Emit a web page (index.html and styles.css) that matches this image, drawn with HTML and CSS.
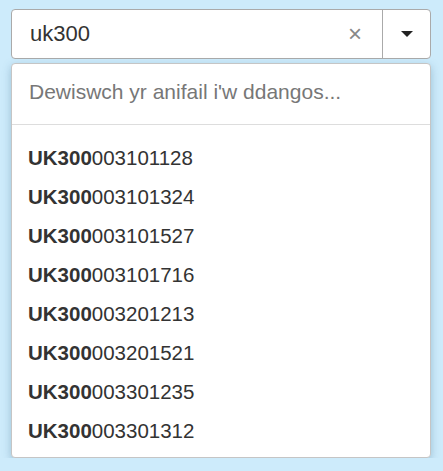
FILE: index.html
```html
<!DOCTYPE html>
<html lang="en">
<head>
    <meta charset="UTF-8">
    <title>Dewis anifail</title>
    <link rel="stylesheet" href="styles.css">
</head>
<body>
    <div class="picker">
        <div class="select-box">
            <div class="select-value">uk300</div>
            <span class="clear">&times;</span>
            <div class="toggle"><span class="caret"></span></div>
        </div>
        <div class="dropdown">
            <div class="search">Dewiswch yr anifail i'w ddangos...</div>
            <ul class="options">
                <li><b>UK300</b>003101128</li>
                <li><b>UK300</b>003101324</li>
                <li><b>UK300</b>003101527</li>
                <li><b>UK300</b>003101716</li>
                <li><b>UK300</b>003201213</li>
                <li><b>UK300</b>003201521</li>
                <li><b>UK300</b>003301235</li>
                <li><b>UK300</b>003301312</li>
            </ul>
        </div>
    </div>
</body>
</html>
```

FILE: styles.css
```css
body {
    margin: 0;
    padding: 9px 12px 0 11px;
    background-color: #cdebfb;
    font-family: "Liberation Sans", Arial, sans-serif;
    color: #333;
}
.picker {
    width: 420px;
}
.select-box {
    display: flex;
    align-items: center;
    height: 48px;
    background: white;
    border: 1px solid #aaa;
    border-radius: 4px;
}
.select-value {
    flex: 1;
    padding-left: 18px;
    font-size: 22px;
    color: #333;
}
.clear {
    width: 30px;
    color: #888;
    font-size: 24px;
    text-align: center;
    margin-right: 12px;
}
.toggle {
    width: 47px;
    height: 100%;
    border-left: 1px solid #aaa;
    display: flex;
    align-items: center;
    justify-content: center;
}
.caret {
    width: 0;
    height: 0;
    border-left: 6px solid transparent;
    border-right: 6px solid transparent;
    border-top: 6px solid #222;
}
.dropdown {
    margin-top: 4px;
    background: white;
    border: 1px solid #c5c5c5;
    border-radius: 4px;
    box-shadow: 0 3px 8px rgba(60, 110, 140, 0.35);
}
.search {
    height: 60px;
    line-height: 56px;
    padding-left: 17px;
    font-size: 21px;
    color: #777;
    border-bottom: 1px solid #ddd;
}
.options {
    list-style: none;
    margin: 0;
    padding: 13px 0 7px;
}
.options li {
    height: 39px;
    line-height: 39px;
    padding-left: 16px;
    font-size: 20.5px;
    color: #333;
}
```
